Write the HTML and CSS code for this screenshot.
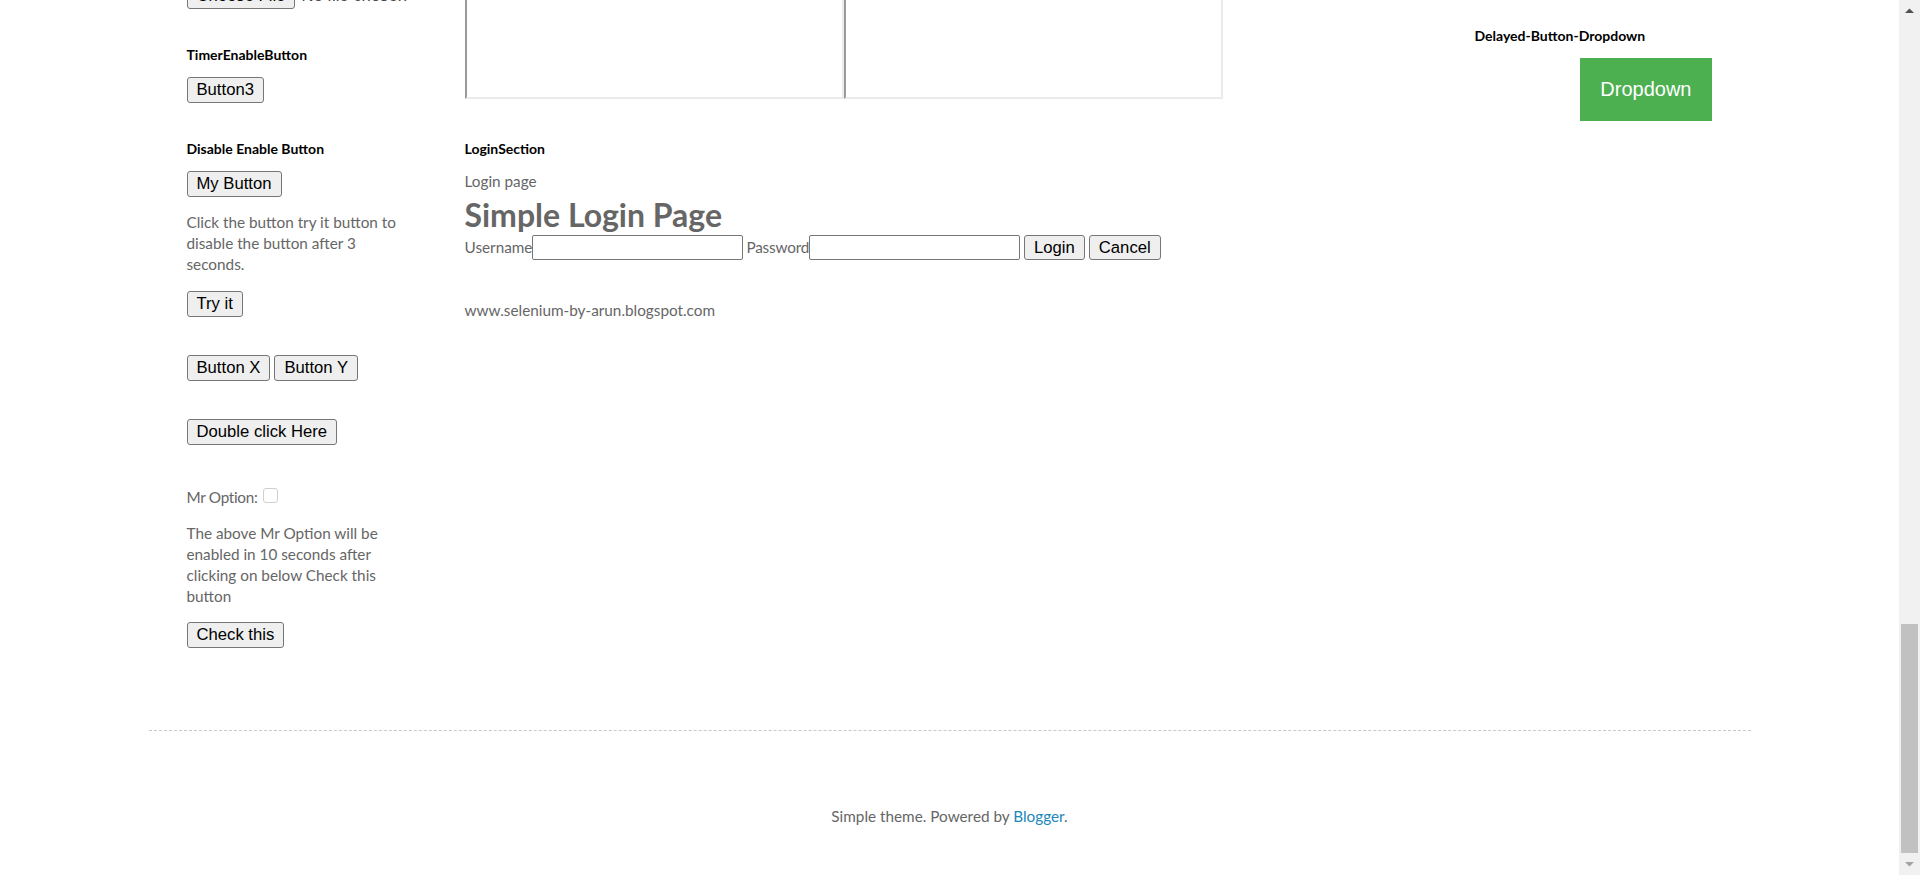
FILE: index.html
```html
<!DOCTYPE html>
<html lang="en">
<head>
<meta charset="utf-8">
<title>Selenium Practise</title>
<link rel="stylesheet" href="styles.css">
</head>
<body>
<div class="viewport">
  <div class="outer">
    <div class="columns">
      <aside class="sidebar sidebar-left">
        <div class="widget file-widget">
          <input class="file" type="file">
        </div>
        <div class="widget">
          <h2 class="widget-title">TimerEnableButton</h2>
          <button class="btn" type="button">Button3</button>
        </div>
        <div class="widget">
          <h2 class="widget-title">Disable Enable Button</h2>
          <button class="btn" type="button">My Button</button>
          <p class="note">Click the button try it button to disable the button after 3 seconds.</p>
          <button class="btn" type="button">Try it</button>
        </div>
        <div class="widget widget-wide">
          <div class="btn-row">
            <button class="btn" type="button">Button X</button>
            <button class="btn" type="button">Button Y</button>
          </div>
        </div>
        <div class="widget widget-wide">
          <button class="btn" type="button">Double click Here</button>
        </div>
        <div class="widget widget-option">
          <div class="option-line"><span class="option-label">Mr Option:</span><input class="check" type="checkbox" disabled></div>
          <p class="note note-tight">The above Mr Option will be enabled in 10 seconds after clicking on below Check this button</p>
          <button class="btn" type="button">Check this</button>
        </div>
      </aside>

      <main class="main">
        <div class="frames">
          <div class="frame"></div>
          <div class="frame"></div>
        </div>
        <div class="widget widget-login">
          <h2 class="widget-title">LoginSection</h2>
          <div class="line">Login page</div>
          <h1 class="login-title">Simple Login Page</h1>
          <form class="login-form">
            <label class="field-label">Username</label><input class="text-input" type="text">
            <label class="field-label field-gap">Password</label><input class="text-input" type="password">
            <button class="btn btn-form" type="button">Login</button>
            <button class="btn btn-form" type="button">Cancel</button>
          </form>
          <div class="site-url">www.selenium-by-arun.blogspot.com</div>
        </div>
      </main>

      <aside class="sidebar sidebar-right">
        <div class="widget widget-dropdown">
          <h2 class="widget-title">Delayed-Button-Dropdown</h2>
          <button class="dropbtn" type="button">Dropdown</button>
        </div>
      </aside>
    </div>

    <footer class="footer">
      Simple theme. Powered by <a class="footer-link" href="#">Blogger</a>.
    </footer>
  </div>
</div>

<div class="scrollbar">
  <div class="sb-arrow">
    <svg width="9" height="5" viewBox="0 0 9 5"><polygon points="0,5 4.5,0.5 9,5" fill="#505050"/></svg>
  </div>
  <div class="sb-track">
    <div class="sb-thumb"></div>
  </div>
  <div class="sb-arrow">
    <svg width="9" height="5" viewBox="0 0 9 5"><polygon points="0,0 4.5,4.5 9,0" fill="#a3a3a3"/></svg>
  </div>
</div>
</body>
</html>
```
FILE: styles.css
```css
html, body {
  margin: 0;
  padding: 0;
  height: 875px;
  overflow: hidden;
}

body {
  display: flex;
  background: #fff;
  font-family: Lato, "Open Sans", sans-serif;
  font-size: 15.3px;
  line-height: 21px;
  color: #666;
}

.viewport {
  flex: 1;
  height: 875px;
  overflow: hidden;
}

.outer {
  width: 1602px;
  margin: 0 auto;
}

.columns {
  display: grid;
  grid-template-columns: 278px 1fr 237px;
  padding: 0 39px 0 38px;
  align-items: start;
}

.sidebar-left {
  padding-right: 58px;
}

.main {
  padding-right: 50px;
}

.widget {
  margin-top: 37px;
}

.widget-wide {
  margin-top: 38px;
}

.widget-option {
  margin-top: 42px;
}

.file-widget {
  margin-top: -17px;
  height: 26px;
}

.widget-login {
  margin-top: 41px;
}

.widget-dropdown {
  margin-top: 27px;
  display: flex;
  flex-direction: column;
}

.widget-title {
  margin: 0 0 13px;
  font-family: Lato, sans-serif;
  font-weight: bold;
  font-size: 14px;
  line-height: 18px;
  color: #000;
}

.file {
  font-family: "Liberation Sans", Arial, sans-serif;
  font-size: 16.67px;
  color: #444;
  height: 26px;
  padding: 0;
  margin: 0;
  display: block;
}

.file::file-selector-button {
  font: inherit;
  color: #000;
  height: 26px;
  padding: 0 9px;
  margin: 0 6px 0 0;
  border: 1px solid #767676;
  border-radius: 3px;
  background: #efefef;
}

.btn {
  display: inline-block;
  box-sizing: border-box;
  height: 26px;
  padding: 0 9px;
  margin: 0;
  border: 1px solid #767676;
  border-radius: 3px;
  background: #efefef;
  color: #000;
  font-family: "Liberation Sans", Arial, sans-serif;
  font-size: 16.67px;
  line-height: 24px;
  vertical-align: top;
}

.btn-row {
  display: flex;
  gap: 4px;
}

.note {
  margin: 15px 0 16px;
}

.note-tight {
  margin-bottom: 15px;
}

.option-line {
  white-space: nowrap;
}

.option-label {
  letter-spacing: -0.3px;
}

.check {
  appearance: none;
  -webkit-appearance: none;
  width: 15px;
  height: 15px;
  margin: 0 0 0 5px;
  border: 1px solid #cfcfcf;
  border-radius: 3px;
  background: #fff;
  vertical-align: baseline;
  box-sizing: border-box;
}

.frames {
  display: flex;
  margin-top: -101px;
}

.frame {
  width: 375px;
  height: 196px;
  border-style: solid;
  border-width: 2px;
  border-color: #9a9a9a #ebebeb #ebebeb #9a9a9a;
  background: #fff;
}

.line {
  height: 21px;
}

.login-title {
  margin: 0;
  padding-top: 2px;
  font-family: Lato, sans-serif;
  font-weight: bold;
  font-size: 32px;
  line-height: 41px;
  color: #666;
}

.login-form {
  display: flex;
  align-items: center;
  height: 25px;
  margin: 0;
}

.field-label {
  line-height: 21px;
}

.field-gap {
  margin-left: 3px;
  letter-spacing: -0.2px;
}

.text-input {
  box-sizing: border-box;
  width: 211px;
  height: 25px;
  margin: 0;
  padding: 0 3px;
  border: 1px solid #767676;
  border-radius: 2px;
  background: #fff;
  font-family: "Liberation Sans", Arial, sans-serif;
  font-size: 16.67px;
}

.btn-form {
  height: 25px;
  line-height: 23px;
  margin-left: 4px;
}

.site-url {
  margin-top: 40px;
}

.dropbtn {
  align-self: flex-end;
  margin: 0;
  padding: 20px;
  border: none;
  background: #4caf50;
  color: #fff;
  font-family: "Liberation Sans", Arial, sans-serif;
  font-size: 20px;
  line-height: 23px;
}

.footer {
  margin-top: 82px;
  padding-top: 75px;
  border-top: 1px dashed #c8c8c8;
  text-align: center;
}

.footer-link {
  color: #2288bb;
  text-decoration: none;
}

.scrollbar {
  width: 21px;
  height: 875px;
  flex: none;
  display: flex;
  flex-direction: column;
  background: #f1f1f1;
}

.sb-arrow {
  height: 21px;
  display: flex;
  align-items: center;
  justify-content: center;
}

.sb-arrow svg {
  display: block;
}

.sb-track {
  flex: 1;
  display: flex;
  flex-direction: column;
  justify-content: flex-end;
  padding: 0 2px 1px;
}

.sb-thumb {
  height: 229px;
  background: #c1c1c1;
}
```
